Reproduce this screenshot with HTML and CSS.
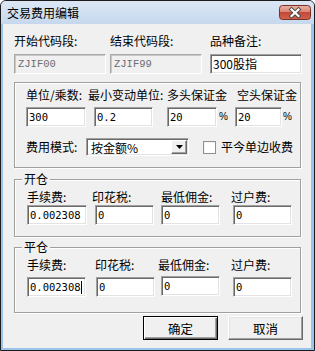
FILE: index.html
```html
<!DOCTYPE html>
<html lang="zh-CN">

<head>
    <meta charset="UTF-8">
    <meta name="viewport" content="width=device-width, initial-scale=1.0">
    <title>交易费用编辑</title>
    <link rel="stylesheet" href="styles.css">
</head>

<body>
    <div class="window">
        <div class="titlebar">
            <span class="title">交易费用编辑</span>
            <span class="close">
                <svg width="32" height="15" viewBox="0 0 32 15">
                    <defs>
                        <linearGradient id="cg" x1="0" y1="0" x2="0" y2="1">
                            <stop offset="0" stop-color="#eab3a7" />
                            <stop offset="0.45" stop-color="#d98572" />
                            <stop offset="0.5" stop-color="#c4493a" />
                            <stop offset="1" stop-color="#d0624c" />
                        </linearGradient>
                    </defs>
                    <rect x="0.5" y="0.5" width="31" height="14" rx="3" fill="url(#cg)" stroke="#7d3026" />
                    <path d="M12.5 4.5 L19.5 11 M19.5 4.5 L12.5 11" stroke="#454545" stroke-width="4" stroke-linecap="square" />
                    <path d="M12.5 4.5 L19.5 11 M19.5 4.5 L12.5 11" stroke="#fff" stroke-width="2.2" stroke-linecap="square" />
                </svg>
            </span>
        </div>

        <div class="client">
            <!-- 代码段 -->
            <div class="top-fields">
                <div class="top-field w96">
                    <div class="label">开始代码段:</div>
                    <div class="edit disabled">ZJIF00</div>
                </div>
                <div class="top-field w100">
                    <div class="label">结束代码段:</div>
                    <div class="edit disabled">ZJIF99</div>
                </div>
                <div class="top-field">
                    <div class="label">品种备注:</div>
                    <div class="edit"><span class="cjk">300股指</span></div>
                </div>
            </div>

            <!-- 单位/保证金 -->
            <div class="group unit-group">
                <div class="label-row">
                    <span class="label u1">单位/乘数:</span>
                    <span class="label u2">最小变动单位:</span>
                    <span class="label u3">多头保证金</span>
                    <span class="label">空头保证金</span>
                </div>
                <div class="edit-row">
                    <div class="edit e60">300</div>
                    <div class="edit e59 ml8">0.2</div>
                    <div class="edit e50 ml14">20</div>
                    <span class="pct">%</span>
                    <div class="edit e47">20</div>
                    <span class="pct pct-last">%</span>
                </div>
                <div class="mode-row">
                    <span class="label mode-label">费用模式:</span>
                    <div class="combo">
                        <span class="combo-text">按金额%</span>
                        <span class="combo-btn">
                            <svg width="7" height="4" viewBox="0 0 7 4">
                                <path d="M0 0 H7 L3.5 4 Z" fill="#000" />
                            </svg>
                        </span>
                    </div>
                    <span class="check"></span>
                    <span class="label check-label">平今单边收费</span>
                </div>
            </div>

            <!-- 开仓 -->
            <div class="group open-group">
                <div class="group-title">开仓</div>
                <div class="label-row fee-labels">
                    <span class="label o1">手续费:</span>
                    <span class="label o2">印花税:</span>
                    <span class="label o3">最低佣金:</span>
                    <span class="label">过户费:</span>
                </div>
                <div class="edit-row fee-edits">
                    <div class="edit e60">0.002308</div>
                    <div class="edit e59 ml8">0</div>
                    <div class="edit e59 ml7">0</div>
                    <div class="edit e59 ml13">0</div>
                </div>
            </div>

            <!-- 平仓 -->
            <div class="group close-group">
                <div class="group-title">平仓</div>
                <div class="label-row fee-labels">
                    <span class="label c1">手续费:</span>
                    <span class="label c2">印花税:</span>
                    <span class="label c3">最低佣金:</span>
                    <span class="label">过户费:</span>
                </div>
                <div class="edit-row fee-edits close-edits">
                    <div class="edit e59">0.002308<span class="caret"></span></div>
                    <div class="edit e59 ml10">0</div>
                    <div class="edit e59 ml6 raised-1">0</div>
                    <div class="edit e59 ml13">0</div>
                </div>
            </div>

            <div class="buttons">
                <span class="btn btn-default">确定</span>
                <span class="btn">取消</span>
            </div>
        </div>
    </div>
</body>

</html>
```

FILE: styles.css
```css
* {
    margin: 0;
    padding: 0;
    box-sizing: border-box;
}

body {
    width: 315px;
    height: 351px;
    overflow: hidden;
    background: #fff;
    font-family: "Noto Sans CJK SC", "Liberation Sans", sans-serif;
    font-size: 12px;
    color: #000;
}

.window {
    width: 315px;
    height: 351px;
    display: flex;
    flex-direction: column;
    border: 1px solid #1c1c1c;
    border-radius: 6px 6px 0 0;
    background: #9cc4ea;
    padding: 0 3px 2px 2px;
}

/* 标题栏 */
.titlebar {
    height: 23px;
    margin: 0 -3px 0 -2px;
    padding: 0 3px 0 6px;
    display: flex;
    align-items: center;
    background: linear-gradient(#dce7f5, #c6d8ee);
    border-radius: 5px 5px 0 0;
}

.title {
    line-height: 14px;
}

.close {
    margin-left: auto;
    display: flex;
}

/* 客户区 */
.client {
    flex: 1;
    display: flex;
    flex-direction: column;
    background: #f0f0f0;
    padding: 10px 0 0 11px;
}

.label {
    line-height: 14px;
    height: 14px;
    white-space: nowrap;
}

.top-fields {
    display: flex;
}

.top-field {
    width: 92px;
}

.top-field.w96 {
    width: 96px;
}

.top-field.w100 {
    width: 100px;
}

.top-field .edit {
    width: 92px;
    margin-top: 6px;
}

/* 输入框 */
.edit {
    height: 20px;
    background: #fff;
    border: 1px solid;
    border-color: #a0a0a0 #fff #fff #a0a0a0;
    box-shadow: inset 1px 1px #696969, inset -1px -1px #e3e3e3;
    padding: 1px 0 0 2px;
    font-family: "DejaVu Sans Mono", monospace;
    font-size: 10.5px;
    line-height: 16px;
    white-space: nowrap;
    overflow: hidden;
    flex-shrink: 0;
}

.edit.disabled {
    background: #f0f0f0;
    color: #6d6d6d;
    font-family: "Liberation Mono", monospace;
    font-size: 10.5px;
    padding-left: 3px;
    box-shadow: inset 1px 1px #c8c8c8;
    border-color: #a8a8a8 #fff #fff #a8a8a8;
}

.edit .cjk {
    font-family: "Noto Sans CJK SC", sans-serif;
    font-size: 12px;
}

.caret {
    display: inline-block;
    width: 1px;
    height: 13px;
    background: #000;
    vertical-align: -3px;
}

.e60 { width: 60px; }
.e59 { width: 59px; }
.e50 { width: 50px; }
.e47 { width: 47px; }
.ml6 { margin-left: 6px; }
.ml7 { margin-left: 7px; }
.ml8 { margin-left: 8px; }
.ml10 { margin-left: 10px; }
.ml13 { margin-left: 13px; }
.ml14 { margin-left: 14px; }

.raised-1 {
    margin-top: -1px;
}

.pct {
    width: 18px;
    padding-left: 2px;
    font-family: "Liberation Sans", sans-serif;
    font-size: 10px;
    line-height: 20px;
}

.pct-last {
    padding-left: 1px;
}

/* 分组框 */
.group {
    width: 287px;
    border: 1px solid #a0a0a0;
    box-shadow: inset 1px 1px #fff, 1px 1px #fff;
}

.group-title {
    width: fit-content;
    margin: -8px 0 0 7px;
    padding: 0 2px;
    line-height: 14px;
    height: 14px;
    background: #f0f0f0;
}

.label-row,
.edit-row {
    display: flex;
}

.unit-group {
    margin-top: 8px;
    padding: 5px 0 11px 11px;
}

.unit-group .edit-row {
    margin-top: 5px;
}

.u1 { width: 62px; }
.u2 { width: 79px; }
.u3 { width: 70px; }

.mode-row {
    display: flex;
    align-items: center;
    height: 18px;
    margin-top: 11px;
}

.mode-label {
    width: 60px;
}

.combo {
    width: 103px;
    height: 18px;
    display: flex;
    background: #fff;
    border: 1px solid;
    border-color: #a0a0a0 #fff #fff #a0a0a0;
    box-shadow: inset 1px 1px #696969, inset -1px -1px #e3e3e3;
    padding: 1px 1px 1px 1px;
}

.combo-text {
    flex: 1;
    padding-left: 3px;
    line-height: 15px;
}

.combo-btn {
    width: 16px;
    display: flex;
    align-items: center;
    justify-content: center;
    background: #f0f0f0;
    border: 1px solid;
    border-color: #fff #696969 #696969 #fff;
    box-shadow: inset -1px -1px #a0a0a0;
}

.check {
    width: 13px;
    height: 13px;
    margin-left: 14px;
    background: #fff;
    border: 1px solid #8f8f8f;
    box-shadow: inset 1px 1px #f4f4f4;
}

.check-label {
    margin-left: 5px;
}

/* 开仓 / 平仓 */
.open-group {
    margin-top: 11px;
    padding: 0 0 11px 12px;
}

.open-group .group-title,
.close-group .group-title {
    margin-left: -5px;
}

.fee-labels {
    margin-top: 4px;
}

.fee-edits {
    margin-top: 1px;
}

.o1 { width: 65px; }
.o2 { width: 69px; }
.o3 { width: 70px; }

.close-group {
    margin-top: 10px;
    padding: 0 0 15px 12px;
}

.c1 { width: 68px; }
.c2 { width: 63px; }
.c3 { width: 73px; }

.close-edits {
    margin-top: 5px;
    align-items: flex-start;
}

/* 按钮 */
.buttons {
    display: flex;
    justify-content: flex-end;
    gap: 10px;
    margin-top: 3px;
    padding-right: 8px;
}

.btn {
    width: 75px;
    height: 24px;
    display: flex;
    align-items: center;
    justify-content: center;
    background: #f0f0f0;
    border: 1px solid;
    border-color: #fff #696969 #696969 #fff;
    box-shadow: inset -1px -1px #a0a0a0, inset 1px 1px #e3e3e3;
    font-size: 12.5px;
}

.btn-default {
    border-color: #000;
    box-shadow: inset 1px 1px #fff, inset -1px -1px #696969, inset -2px -2px #a0a0a0;
}
```
